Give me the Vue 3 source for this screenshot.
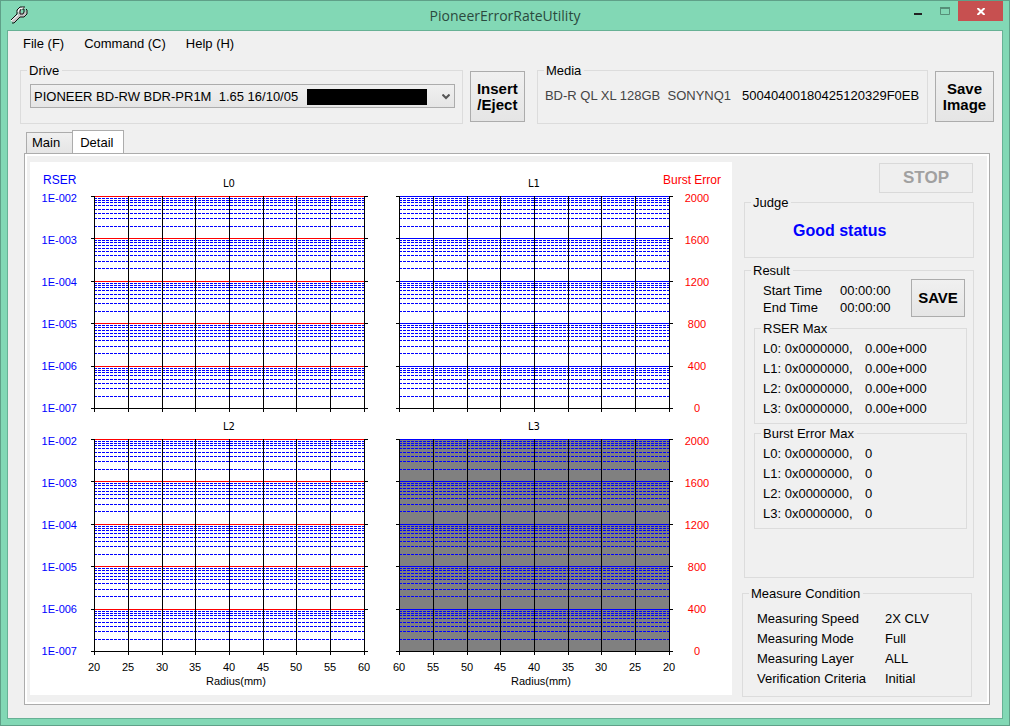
<script setup>
import { ref } from 'vue'

const drive = ref('pr1m')
const plotWidth = 270
const verticals = [0, 34, 68, 101, 135, 169, 202, 236, 270]
const decades = [0, 42, 85, 127, 170]
const evenSteps = [2, 4, 6, 9, 13, 17, 22, 30]
const oddSteps = [2, 4, 7, 10, 13, 17, 23, 30]
const minors = decades.flatMap((y, i) => (i % 2 ? oddSteps : evenSteps).map((s) => y + s))
const bottom = 212

const plots = [
  { name: 'L0', x: 64, y: 34, major: 'red' },
  { name: 'L1', x: 369, y: 34, major: 'blue' },
  { name: 'L2', x: 64, y: 277, major: 'red' },
  { name: 'L3', x: 369, y: 277, major: 'blue', disabled: true },
]
const rates = ['1E-002', '1E-003', '1E-004', '1E-005', '1E-006', '1E-007']
const bursts = [2000, 1600, 1200, 800, 400, 0]
const radii = [20, 25, 30, 35, 40, 45, 50, 55, 60]
const radiiReversed = [...radii].reverse()

const layers = ['L0', 'L1', 'L2', 'L3']
const conditions = [
  ['Measuring Speed', '2X CLV'],
  ['Measuring Mode', 'Full'],
  ['Measuring Layer', 'ALL'],
  ['Verification Criteria', 'Initial'],
]
</script>

<template>
  <div class="window">
    <header class="titlebar">
      <svg class="app-icon" width="18" height="18" viewBox="0 0 18 18" aria-hidden="true">
        <path d="M1 14 L8 8 C6 4 9 0 14 1 L15 2 L11 4 L11 7 L14 7 L17 4 C18 9 14 12 10 11 L5 16 L2 16 Z" fill="#c4c4c4" />
        <path d="M1 14 L7 8 L7 4 L10 1 L15 1 M11 3 L10 5 L10 8 L13 8 L14 6 L14 3 L12 3 M16 3 L17 4 L17 8 L14 11 L10 11 L4 17 L2 17" fill="none" stroke="#111" />
        <path d="M1 15 L8 9 M8 6 L9 3 L13 2" fill="none" stroke="#fff" />
      </svg>
      <h1 class="title">PioneerErrorRateUtility</h1>
      <div class="captions">
        <button type="button" class="caption" aria-label="Minimize">
          <svg width="8" height="2" viewBox="0 0 8 2"><rect width="8" height="2" fill="#222" /></svg>
        </button>
        <button type="button" class="caption restore" aria-label="Maximize" disabled>
          <svg width="10" height="8" viewBox="0 0 10 8"><path d="M0.5 0 V7.5 H9.5 V0 M0 1 H10" fill="none" stroke="#568f78" /><rect width="10" height="2" fill="#568f78" /></svg>
        </button>
        <button type="button" class="caption close" aria-label="Close">
          <svg width="8" height="7" viewBox="0 0 8 7"><path d="M0.5 0 L7.5 7 M7.5 0 L0.5 7" fill="none" stroke="#fff" stroke-width="2" /></svg>
        </button>
      </div>
    </header>

    <main class="client">
      <nav class="menu">
        <button type="button">File (F)</button>
        <button type="button">Command (C)</button>
        <button type="button">Help (H)</button>
      </nav>

      <div class="toolbar">
        <fieldset class="group drive">
          <legend><label for="drive">Drive</label></legend>
          <div class="combo">
            <select id="drive" v-model="drive">
              <option value="pr1m">PIONEER BD-RW BDR-PR1M&nbsp; 1.65 16/10/05</option>
            </select>
            <span class="mask"></span>
            <svg class="chevron" width="8" height="6" viewBox="0 0 8 6" aria-hidden="true"><path d="M0.5 0.5 L4 4 L7.5 0.5" fill="none" stroke="#555" stroke-width="2" /></svg>
          </div>
        </fieldset>
        <button type="button" class="push insert">Insert<br />/Eject</button>
        <fieldset class="group media">
          <legend>Media</legend>
          <div class="media-row">
            <span class="disc">BD-R QL XL 128GB&nbsp; SONYNQ1</span>
            <span>50040400180425120329F0EB</span>
          </div>
        </fieldset>
        <button type="button" class="push image">Save<br />Image</button>
      </div>

      <div class="tabs" role="tablist">
        <button type="button" role="tab" class="tab" aria-selected="false">Main</button>
        <button type="button" role="tab" class="tab active" aria-selected="true">Detail</button>
      </div>

      <section class="panel" role="tabpanel">
        <div class="chart">
          <svg width="702" height="533" viewBox="0 0 702 533" role="img" aria-label="Error rate by radius">
            <text x="13" y="22" class="heading rate">RSER</text>
            <text x="691" y="22" class="heading burst" text-anchor="end">Burst Error</text>
            <g v-for="p in plots" :key="p.name" :transform="`translate(${p.x} ${p.y})`" shape-rendering="crispEdges">
              <rect v-if="p.disabled" :width="plotWidth" :height="bottom" fill="#808080" />
              <path v-for="y in minors" :key="y" :d="`M0 ${y + 0.5}H${plotWidth}`" stroke="#00f" stroke-dasharray="3 1" />
              <path v-for="y in decades" :key="'d' + y" :d="`M0 ${y + 0.5}H${plotWidth}`" :stroke="p.major" />
              <path v-for="x in verticals" :key="'v' + x" :d="`M${x + 0.5} 0V${bottom + 4}`" stroke="#000" />
              <path v-for="y in [...decades, bottom]" :key="'t' + y" :d="`M-3 ${y + 0.5}H1M${plotWidth} ${y + 0.5}H${plotWidth + 4}`" stroke="#000" />
              <path :d="`M0 ${bottom + 0.5}H${plotWidth}`" stroke="#000" />
              <text x="135" y="-9" class="name" text-anchor="middle">{{ p.name }}</text>
            </g>
            <g v-for="top in [40, 283]" :key="top">
              <text v-for="(r, i) in rates" :key="r" x="47" :y="top + i * 42" class="tick rate" text-anchor="end">{{ r }}</text>
              <text v-for="(b, i) in bursts" :key="b" x="667" :y="top + i * 42" class="tick burst" text-anchor="middle">{{ b }}</text>
            </g>
            <text v-for="(r, i) in radii" :key="'a' + r" :x="64 + verticals[i]" y="509" class="tick" text-anchor="middle">{{ r }}</text>
            <text v-for="(r, i) in radiiReversed" :key="'b' + r" :x="369 + verticals[i]" y="509" class="tick" text-anchor="middle">{{ r }}</text>
            <text x="206" y="523" class="tick" text-anchor="middle">Radius(mm)</text>
            <text x="511" y="523" class="tick" text-anchor="middle">Radius(mm)</text>
          </svg>
        </div>

        <aside class="side">
          <button type="button" class="push stop" disabled>STOP</button>

          <fieldset class="group judge">
            <legend>Judge</legend>
            <output class="status">Good status</output>
          </fieldset>

          <fieldset class="group result">
            <legend>Result</legend>
            <div class="timing">
              <dl class="pairs times">
                <dt>Start Time</dt><dd>00:00:00</dd>
                <dt>End Time</dt><dd>00:00:00</dd>
              </dl>
              <button type="button" class="push save">SAVE</button>
            </div>
            <fieldset class="group inner">
              <legend>RSER Max</legend>
              <dl class="pairs">
                <template v-for="l in layers" :key="l">
                  <dt>{{ l }}: 0x0000000,</dt><dd>0.00e+000</dd>
                </template>
              </dl>
            </fieldset>
            <fieldset class="group inner">
              <legend>Burst Error Max</legend>
              <dl class="pairs">
                <template v-for="l in layers" :key="l">
                  <dt>{{ l }}: 0x0000000,</dt><dd>0</dd>
                </template>
              </dl>
            </fieldset>
          </fieldset>

          <fieldset class="group measure">
            <legend>Measure Condition</legend>
            <dl class="pairs conditions">
              <template v-for="[k, v] in conditions" :key="k">
                <dt>{{ k }}</dt><dd>{{ v }}</dd>
              </template>
            </dl>
          </fieldset>
        </aside>
      </section>
    </main>
  </div>
</template>

<style>
body {
  margin: 0;
}
</style>

<style scoped>
* {
  box-sizing: border-box;
}
.window {
  display: flex;
  flex-direction: column;
  min-height: 100vh;
  padding: 0 6px 6px;
  border: 1px solid #5fa088;
  background: #82d8b5;
  color: #000;
  font: 13px/16px "Liberation Sans", Arial, sans-serif;
}
button,
select {
  font: inherit;
  color: inherit;
  padding: 0;
  border: 0;
  background: none;
}
.titlebar {
  display: grid;
  grid-template-columns: 1fr auto 1fr;
  height: 29px;
}
.app-icon {
  margin: 5px 0 0 3px;
}
.title {
  margin: 0;
  font: 14px/30px "Open Sans", "Noto Sans", sans-serif;
  color: #2b4a3e;
}
.captions {
  display: flex;
  justify-content: flex-end;
  align-items: flex-start;
}
.caption {
  display: flex;
  align-items: center;
  justify-content: center;
  width: 27px;
  height: 20px;
}
.caption:first-child {
  padding-top: 6px;
}
.close {
  width: 45px;
  background: #c75050;
}
.client {
  flex: 1;
  display: flex;
  flex-direction: column;
  border: 1px solid #67b195;
  background: #f0f0f0;
}
.menu {
  display: flex;
  gap: 20px;
  height: 30px;
  padding: 5px 15px;
  align-items: flex-start;
}
.toolbar {
  display: flex;
  align-items: flex-start;
  padding: 0 8px 0 12px;
}
.group {
  min-width: 0;
  margin: 0;
  padding: 0;
  border: 1px solid #dcdcdc;
}
.group > legend {
  margin-left: 6px;
  padding: 2px 3px 0 2px;
}
.drive {
  flex: 443;
  height: 63px;
}
.media {
  flex: 391;
  height: 63px;
  margin-left: 12px;
}
.combo {
  position: relative;
  margin: 5px 7px 0 9px;
}
.combo select {
  display: block;
  width: 100%;
  height: 24px;
  padding: 1px 24px 0 3px;
  border: 1px solid #acacac;
  border-radius: 0;
  background: linear-gradient(#f0f0f0, #e5e5e5);
  appearance: none;
}
.mask {
  position: absolute;
  top: 5px;
  right: 28px;
  width: 120px;
  height: 16px;
  background: #000;
  pointer-events: none;
}
.chevron {
  position: absolute;
  top: 10px;
  right: 5px;
  pointer-events: none;
}
.media-row {
  display: flex;
  gap: 11px;
  padding: 9px 7px;
  white-space: nowrap;
}
.disc {
  color: #444;
}
.push {
  border: 1px solid #acacac;
  background: linear-gradient(#f0f0f0, #e5e5e5);
  font-size: 15px;
  font-weight: bold;
  text-align: center;
}
.insert,
.image {
  height: 51px;
  margin: 10px 0 0 7px;
}
.insert {
  width: 55px;
}
.image {
  width: 59px;
}
.tabs {
  display: flex;
  align-items: flex-end;
  height: 30px;
  margin: 0 18px -1px;
}
.tab {
  height: 22px;
  padding: 0 12px 0 5px;
  border: 1px solid #acacac;
  border-right: 0;
  background: linear-gradient(#f0f0f0, #e5e5e5);
}
.tab.active {
  height: 24px;
  padding: 0 10px 0 7px;
  border-right: 1px solid #acacac;
  border-bottom: 0;
  background: #fff;
}
.panel {
  flex: 1;
  display: flex;
  align-items: flex-start;
  margin: 0 12px 13px 16px;
  padding: 6px 15px 5px 3px;
  border: 1px solid #acacac;
  background: #f0f0f0;
  box-shadow: inset 0 0 0 2px #fff;
}
.chart {
  flex: 1 0 702px;
  margin: 2px 0 0 2px;
  background: #fff;
}
.chart svg {
  display: block;
}
.heading {
  font-size: 12px;
}
.tick {
  font-size: 11px;
}
.name {
  font: 10px "DejaVu Sans", sans-serif;
}
.rate {
  fill: #00f;
}
.burst {
  fill: #f00;
}
.side {
  flex: 0 0 232px;
  display: flex;
  flex-direction: column;
  margin-left: 10px;
}
.stop {
  align-self: flex-end;
  width: 94px;
  height: 30px;
  margin: 3px 1px 0 0;
  border-color: #d9d9d9;
  background: #efefef;
  color: #a0a0a0;
  font-size: 17px;
}
.judge,
.result {
  margin-left: 2px;
}
.judge {
  height: 65px;
}
.status {
  display: block;
  padding: 12px 48px 0;
  color: #00f;
  font-size: 16px;
  font-weight: bold;
}
.result {
  margin-top: 3px;
  padding-bottom: 48px;
}
.timing {
  display: flex;
  justify-content: space-between;
  align-items: flex-start;
  padding: 0 8px 2px 18px;
}
.save {
  width: 54px;
  height: 38px;
}
.inner {
  margin: 0 6px 0 9px;
}
.pairs {
  display: grid;
  grid-template-columns: 102px auto;
  justify-content: start;
  margin: 0;
  padding: 2px 8px 4px;
  line-height: 20px;
  white-space: nowrap;
}
.pairs dd {
  margin: 0;
}
.times {
  grid-template-columns: 77px auto;
  padding: 3px 0 0;
  line-height: 17px;
}
.measure {
  width: 230px;
  margin-top: 6px;
}
.conditions {
  grid-template-columns: 128px auto;
  padding: 7px 14px;
}
</style>
